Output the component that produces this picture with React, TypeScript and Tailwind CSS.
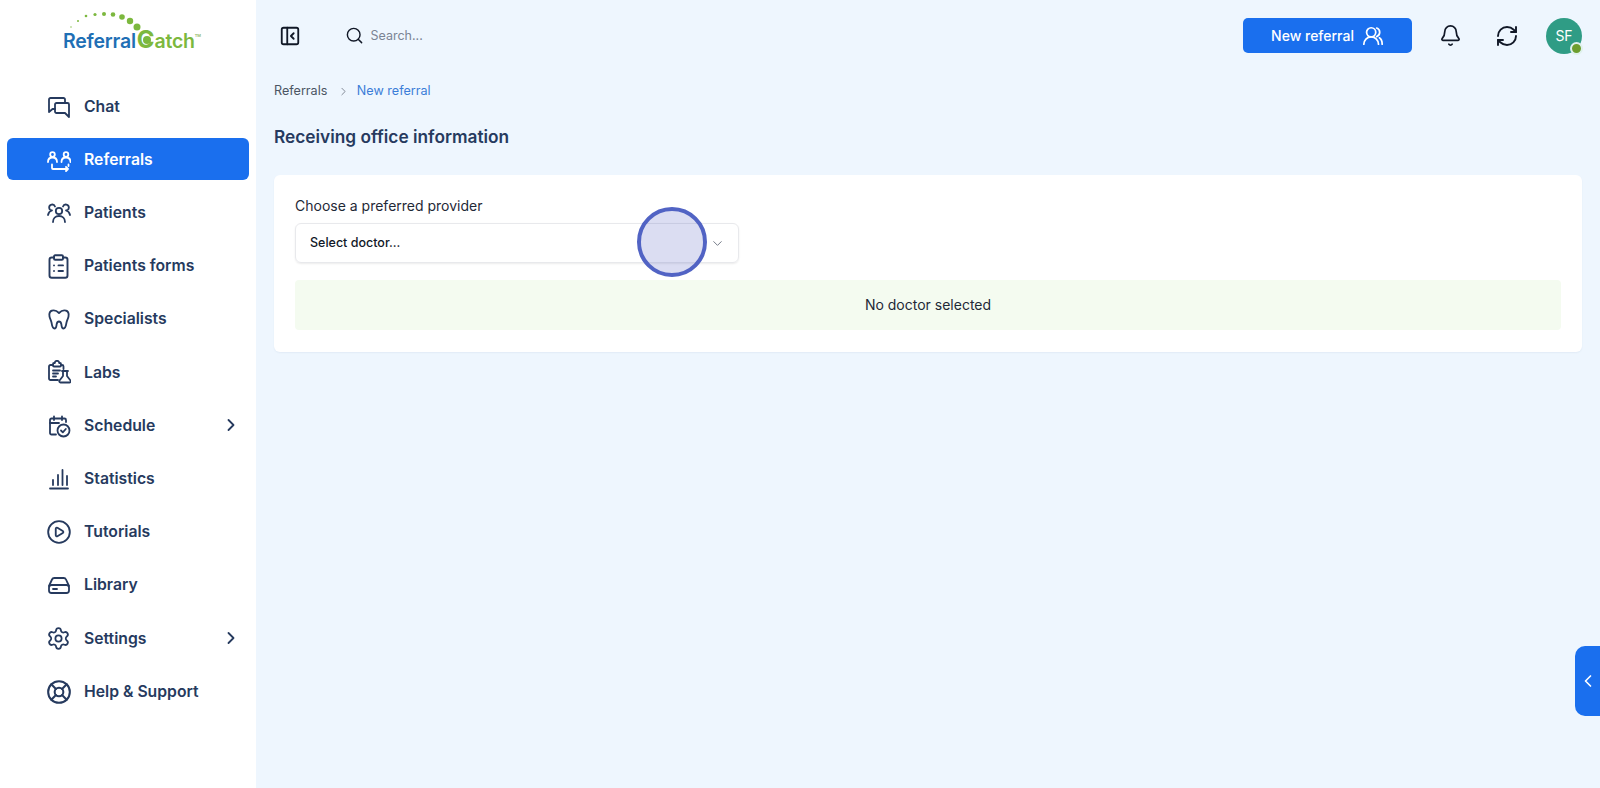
import type { ReactNode } from "react";
import {
  Bell,
  ChevronDown,
  ChevronLeft,
  ChevronRight,
  CirclePlay,
  ClipboardList,
  LifeBuoy,
  RefreshCw,
  Search,
  Settings,
} from "lucide-react";

function Svg({ children }: { children: ReactNode }) {
  return (
    <svg viewBox="0 0 24 24" fill="none" stroke="currentColor" strokeWidth="1.8" strokeLinecap="round" strokeLinejoin="round" className="h-[24px] w-[24px] shrink-0">
      {children}
    </svg>
  );
}

const ChatIcon = () => (
  <Svg>
    <path d="M18 8V4.500A1.500 1.500 0 0 0 16.500 3h-13A1.500 1.500 0 0 0 2 4.500V17l3.500-3H8" />
    <path d="M8 9.500A1.500 1.500 0 0 1 9.500 8h11A1.500 1.500 0 0 1 22 9.500V22l-4-4H9.500A1.500 1.500 0 0 1 8 16.500Z" />
  </Svg>
);

const ReferralIcon = () => (
  <Svg>
    <circle cx="5.500" cy="6.500" r="2.300" />
    <circle cx="19" cy="6.500" r="2.300" />
    <path d="M1 14c0-3 1.800-4.500 4.500-4.500S10 11 10 14" />
    <path d="M14.500 14c0-3 1.800-4.500 4.500-4.500s4.500 1.500 4.500 4.500" />
    <path d="M5 16.500V20a1 1 0 0 0 1 1h15M19 19l2 2-2 2M21.500 16.500V18" />
  </Svg>
);

const PatientsIcon = () => (
  <Svg>
    <circle cx="12" cy="10" r="3.200" />
    <path d="M6 21c0-3.500 2.500-6 6-6s6 2.500 6 6" />
    <path d="M8 5.500a3 3 0 1 0-3 4c-1.800.5-3.500 2-4 4.500" />
    <path d="M16 5.500a3 3 0 1 1 3 4c1.800.5 3.500 2 4 4.500" />
  </Svg>
);

const ToothIcon = () => (
  <Svg>
    <path d="M12 6c-2-2-4.500-3-6.500-2.500C3 4 2 6.500 2.500 9.500c.4 2.200 1.500 3.500 2 6 .4 2.500 1 6 3 6s1.800-2.500 2.200-4.500c.3-1.500 1-2.500 2.300-2.500s2 1 2.300 2.500c.4 2 .2 4.500 2.200 4.500s2.600-3.500 3-6c.5-2.500 1.600-3.800 2-6 .5-3-.5-5.500-3-6C16.500 3 14 4 12 6Z" />
  </Svg>
);

const LabsIcon = () => (
  <Svg>
    <path d="M11 20H3.500A1.500 1.500 0 0 1 2 18.500V6.500A1.500 1.500 0 0 1 3.500 5H6M14 5h1a1.500 1.500 0 0 1 1.500 1.500V9" />
    <path d="M6 5.500V4a1 1 0 0 1 1-1h.800a2.200 2.200 0 0 1 4.400 0H13a1 1 0 0 1 1 1v1.500a1 1 0 0 1-1 1H7a1 1 0 0 1-1-1Z" />
    <path d="M6 10.500h7M6 13.500h5M6 16.500h3" />
    <path d="M16 11v5l-3.500 4.500a1.300 1.300 0 0 0 1 2h9a1.300 1.300 0 0 0 1-2L20 16v-5M15 11h6" />
  </Svg>
);

const ScheduleIcon = () => (
  <Svg>
    <path d="M9 20.500H4.500A1.500 1.500 0 0 1 3 19V6a1.500 1.500 0 0 1 1.500-1.500h13A1.500 1.500 0 0 1 19 6v2" />
    <path d="M7 2.500v3.500M15 2.500v3.500M3 9h9" />
    <circle cx="16.500" cy="16.500" r="6" />
    <path d="m14 16.500 1.800 1.800 3-3.300" />
  </Svg>
);

const StatsIcon = () => (
  <Svg>
    <path d="M3 21.500h18M6 18v-5M11 18V8M15.500 18V3M20 18V9" />
  </Svg>
);

const LibraryIcon = () => (
  <Svg>
    <path d="M2 13 5 6.500A2.500 2.500 0 0 1 7.300 5h9.400A2.500 2.500 0 0 1 19 6.500l3 6.500" />
    <rect x="2" y="12" width="20" height="8" rx="2.500" />
    <path d="M6 16h4" />
  </Svg>
);

const nav: { label: string; icon: ReactNode; active?: boolean; more?: boolean }[] = [
  { label: "Chat", icon: <ChatIcon /> },
  { label: "Referrals", icon: <ReferralIcon />, active: true },
  { label: "Patients", icon: <PatientsIcon /> },
  { label: "Patients forms", icon: <ClipboardList size={27} strokeWidth={1.7} className="shrink-0" /> },
  { label: "Specialists", icon: <ToothIcon /> },
  { label: "Labs", icon: <LabsIcon /> },
  { label: "Schedule", icon: <ScheduleIcon />, more: true },
  { label: "Statistics", icon: <StatsIcon /> },
  { label: "Tutorials", icon: <CirclePlay size={26} strokeWidth={1.7} className="shrink-0" /> },
  { label: "Library", icon: <LibraryIcon /> },
  { label: "Settings", icon: <Settings size={25} strokeWidth={1.7} className="shrink-0" />, more: true },
  { label: "Help & Support", icon: <LifeBuoy size={26} strokeWidth={1.9} className="shrink-0" /> },
];

const dots = [
  [21, 27, 0.7],
  [28, 21, 1],
  [36, 16, 1.3],
  [45, 14.5, 1.6],
  [54, 14, 2],
  [63, 14.5, 2.3],
  [72, 17, 2.8],
  [80, 21, 3.2],
  [87, 27, 3.5],
];

function Logo() {
  return (
    <div className="relative h-[85px] w-full pl-[63px] pt-[28px]">
      <svg viewBox="0 0 160 40" className="absolute left-[50px] top-0 h-[40px] w-[160px]">
        {dots.map(([x, y, r]) => (
          <circle key={x} cx={x} cy={y} r={r} fill="#7cb83e" />
        ))}
      </svg>
      <div className="flex items-baseline text-[19.5px] font-semibold leading-[24px] tracking-[-0.2px]">
        <span className="text-[#1f6fb5]">Referral</span>
        <span className="relative ml-[1px] text-[24px] font-bold leading-[24px] text-[#7cb83e]">
          C
          <span className="absolute left-[6px] top-[8px] h-[8px] w-[8px] rounded-full bg-[#7cb83e]" />
        </span>
        <span className="text-[#7cb83e]">atch</span>
        <span className="relative -top-[11px] text-[4px] leading-none text-[#8fb86a]">TM</span>
      </div>
    </div>
  );
}

export default function App() {
  return (
    <div className="relative flex h-[788px] w-[1600px] overflow-hidden bg-[#eef6fe] font-['Inter',sans-serif] text-[#263a5e]">
      <aside className="flex w-[256px] shrink-0 flex-col bg-white">
        <Logo />
        <nav className="flex flex-col gap-[11.2px] px-[7px]">
          {nav.map((item) => (
            <div
              key={item.label}
              className={`flex h-[42px] w-[242px] items-center rounded-[6px] pl-[39.5px] pr-[8.5px] ${
                item.active ? "bg-[#1a6fee] text-white" : "text-[#263a5e]"
              }`}
            >
              <span className="flex w-[24px] justify-center pt-[1px]">{item.icon}</span>
              <span className="ml-[13.5px] flex-1 pt-[1px] text-[15.75px] font-semibold">{item.label}</span>
              {item.more && <ChevronRight size={20} strokeWidth={2.2} />}
            </div>
          ))}
        </nav>
      </aside>

      <main className="flex min-w-0 flex-1 flex-col pl-[18px] pr-[18px]">
        <header className="flex h-[71px] shrink-0 items-center">
          <svg viewBox="0 0 24 24" fill="none" stroke="#111827" strokeWidth="2" strokeLinecap="round" strokeLinejoin="round" className="ml-[5px] h-[22px] w-[22px]">
            <rect x="3" y="3" width="18" height="18" rx="2" />
            <path d="M9 3v18M16 9l-3 3 3 3" />
          </svg>
          <Search size={19} strokeWidth={1.8} className="ml-[43.5px] text-[#111827]" />
          <span className="ml-[7px] pt-[2px] text-[12.5px] text-[#7b8494]">Search...</span>
          <div className="ml-auto flex items-center">
            <button className="flex h-[35px] w-[169px] items-center justify-center gap-[8px] rounded-[5px] bg-[#1a6fee] text-[14px] font-medium text-white">
              New referral
              <svg viewBox="0 0 24 24" fill="none" stroke="currentColor" strokeWidth="1.9" strokeLinecap="round" strokeLinejoin="round" className="h-[22px] w-[22px]">
                <circle cx="10" cy="8" r="5" />
                <path d="M2 21c0-4.500 3.500-8 8-8s8 3.500 8 8M16 3.300a5 5 0 0 1 0 9.400M19 14c2 1.300 3 3.500 3 7" />
              </svg>
            </button>
            <Bell size={23} strokeWidth={1.8} className="ml-[26.5px] text-[#111827]" />
            <RefreshCw size={24} strokeWidth={1.9} className="ml-[33.5px] text-[#111827]" />
            <div className="relative ml-[27px] flex h-[36px] w-[36px] items-center justify-center rounded-full bg-[#2f9c85] text-[14px] text-white">
              SF
              <span className="absolute bottom-[-1px] right-[-1px] h-[13px] w-[13px] rounded-full border-2 border-[#dff1ec] bg-[#6d9e2e]" />
            </div>
          </div>
        </header>

        <div className="mt-[11px] flex h-[18px] items-center text-[12.6px] leading-[18px]">
          <span className="text-[#4b5563]">Referrals</span>
          <ChevronRight size={13} strokeWidth={1.5} className="ml-[10px] text-[#6b7280]" />
          <span className="ml-[6.5px] text-[#3b7dd8]">New referral</span>
        </div>

        <h1 className="mt-[23px] text-[17.3px] font-semibold leading-[28px] text-[#263a5e]">Receiving office information</h1>

        <section className="mt-[24px] h-[177px] rounded-[6px] bg-white px-[21px] pt-[22px] shadow-[0_1px_2px_rgba(30,60,120,0.06)]">
          <label className="block text-[14px] leading-[18px] text-[#1f2937]">Choose a preferred provider</label>
          <div className="mt-[8px] flex h-[40px] w-[444px] items-center justify-between rounded-[6px] border border-[#e8e9ec] pl-[14px] pr-[13px] text-[12.5px] font-medium text-[#111827] shadow-[0_1px_2px_rgba(0,0,0,0.08)]">
            Select doctor...
            <ChevronDown size={15} strokeWidth={1.5} className="text-[#6b7280]" />
          </div>
          <div className="mt-[17px] flex h-[50px] items-center justify-center rounded-[4px] bg-[#f4fbf0] pb-[2px] text-[14px] text-[#1f2937]">
            No doctor selected
          </div>
        </section>
      </main>

      <div className="absolute left-[637px] top-[207px] h-[70px] w-[70px] rounded-full border-[4px] border-[#5163c4] bg-[#4b55be]/20" />

      <div className="absolute bottom-[72px] right-0 flex h-[70px] w-[25px] items-center rounded-l-[10px] bg-[#1a6fee] pl-[3px] text-white">
        <ChevronLeft size={20} strokeWidth={2} />
      </div>
    </div>
  );
}
